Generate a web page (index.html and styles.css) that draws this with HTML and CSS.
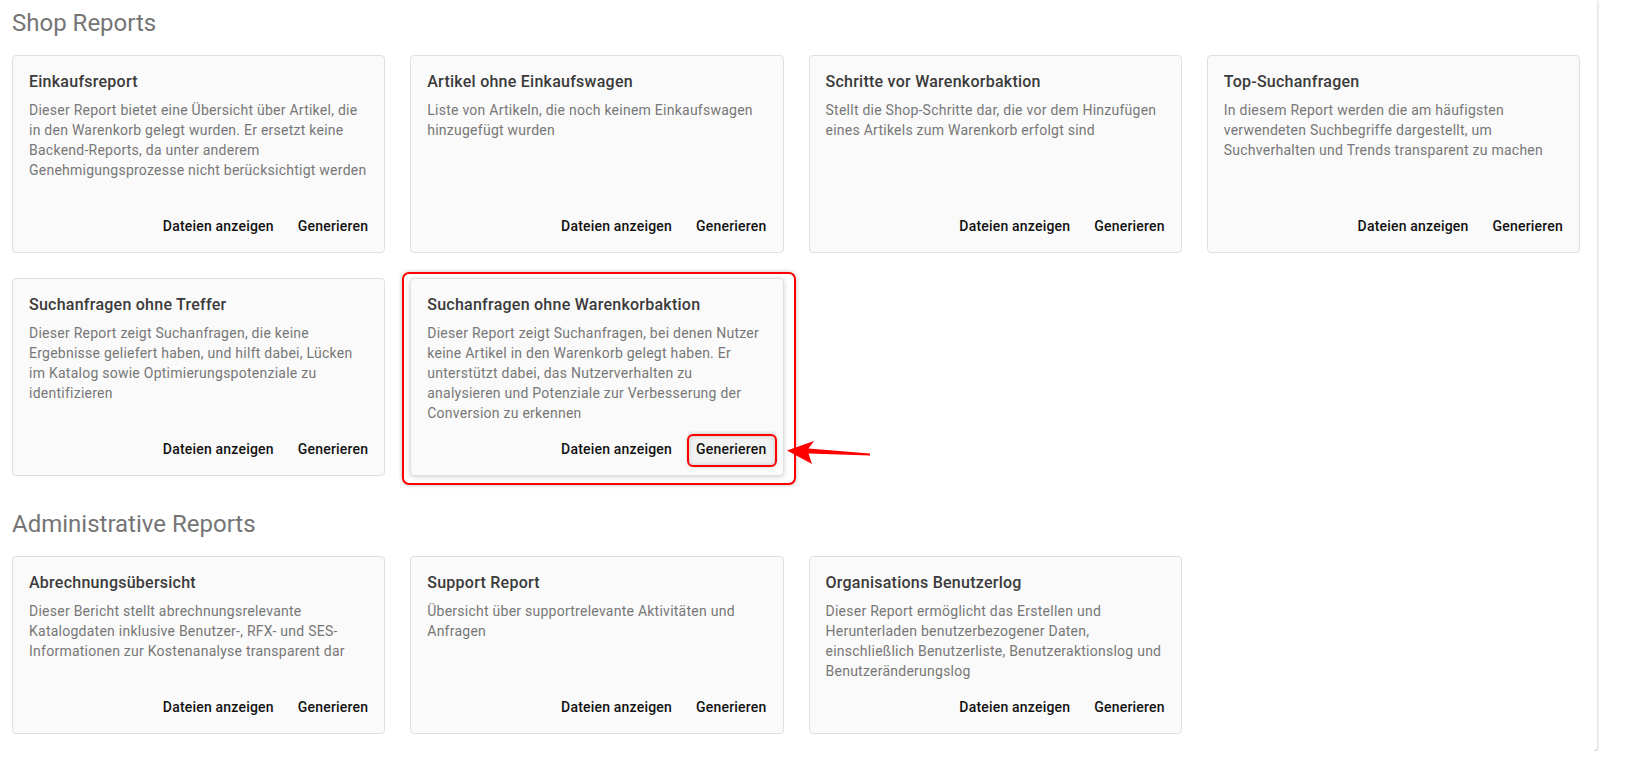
FILE: index.html
```html
<!DOCTYPE html>
<html>
    <head>
        <meta charset="utf-8">
        <link rel="stylesheet" href="styles.css">
    </head>
    <body>
    <div class="panel">
        <h2 class="section-title">Shop Reports</h2>
        <div class="report-grid">
            <div class="report-card">
                <h3 class="report-title">Einkaufsreport</h3>
                <p class="report-text">Dieser Report bietet eine Übersicht über Artikel, die in den Warenkorb gelegt wurden. Er ersetzt keine Backend-Reports, da unter anderem Genehmigungsprozesse nicht berücksichtigt werden</p>
                <div class="report-actions">
                    <button class="report-button">Dateien anzeigen</button>
                    <button class="report-button">Generieren</button>
                </div>
            </div>
            <div class="report-card">
                <h3 class="report-title">Artikel ohne Einkaufswagen</h3>
                <p class="report-text">Liste von Artikeln, die noch keinem Einkaufswagen hinzugefügt wurden</p>
                <div class="report-actions">
                    <button class="report-button">Dateien anzeigen</button>
                    <button class="report-button">Generieren</button>
                </div>
            </div>
            <div class="report-card">
                <h3 class="report-title">Schritte vor Warenkorbaktion</h3>
                <p class="report-text">Stellt die Shop-Schritte dar, die vor dem Hinzufügen eines Artikels zum Warenkorb erfolgt sind</p>
                <div class="report-actions">
                    <button class="report-button">Dateien anzeigen</button>
                    <button class="report-button">Generieren</button>
                </div>
            </div>
            <div class="report-card">
                <h3 class="report-title">Top-Suchanfragen</h3>
                <p class="report-text">In diesem Report werden die am häufigsten verwendeten Suchbegriffe dargestellt, um Suchverhalten und Trends transparent zu machen</p>
                <div class="report-actions">
                    <button class="report-button">Dateien anzeigen</button>
                    <button class="report-button">Generieren</button>
                </div>
            </div>
            <div class="report-card">
                <h3 class="report-title">Suchanfragen ohne Treffer</h3>
                <p class="report-text">Dieser Report zeigt Suchanfragen, die keine Ergebnisse geliefert haben, und hilft dabei, Lücken im Katalog sowie Optimierungspotenziale zu identifizieren</p>
                <div class="report-actions">
                    <button class="report-button">Dateien anzeigen</button>
                    <button class="report-button">Generieren</button>
                </div>
            </div>
            <div class="report-card marked">
                <span class="mark-frame"></span>
                <h3 class="report-title">Suchanfragen ohne Warenkorbaktion</h3>
                <p class="report-text">Dieser Report zeigt Suchanfragen, bei denen Nutzer keine Artikel in den Warenkorb gelegt haben. Er unterstützt dabei, das Nutzerverhalten zu analysieren und Potenziale zur Verbesserung der Conversion zu erkennen</p>
                <div class="report-actions">
                    <button class="report-button">Dateien anzeigen</button>
                    <button class="report-button marked-button">Generieren
                        <svg class="mark-arrow" width="84" height="26" viewBox="0 0 84 26">
                            <polygon points="0,10.5 27,1 21.5,8.5 83,13.5 83,15.5 21.5,13.5 25,24" fill="#f00"/>
                        </svg>
                    </button>
                </div>
            </div>
        </div>

        <h2 class="section-title spaced">Administrative Reports</h2>
        <div class="report-grid">
            <div class="report-card">
                <h3 class="report-title">Abrechnungsübersicht</h3>
                <p class="report-text">Dieser Bericht stellt abrechnungsrelevante Katalogdaten inklusive Benutzer-, RFX- und SES-Informationen zur Kostenanalyse transparent dar</p>
                <div class="report-actions">
                    <button class="report-button">Dateien anzeigen</button>
                    <button class="report-button">Generieren</button>
                </div>
            </div>
            <div class="report-card">
                <h3 class="report-title">Support Report</h3>
                <p class="report-text">Übersicht über supportrelevante Aktivitäten und Anfragen</p>
                <div class="report-actions">
                    <button class="report-button">Dateien anzeigen</button>
                    <button class="report-button">Generieren</button>
                </div>
            </div>
            <div class="report-card">
                <h3 class="report-title">Organisations Benutzerlog</h3>
                <p class="report-text">Dieser Report ermöglicht das Erstellen und Herunterladen benutzerbezogener Daten, einschließlich Benutzerliste, Benutzeraktionslog und Benutzeränderungslog</p>
                <div class="report-actions">
                    <button class="report-button">Dateien anzeigen</button>
                    <button class="report-button">Generieren</button>
                </div>
            </div>
        </div>
    </div>
    </body>
</html>
```

FILE: styles.css
```css
body {
    margin: 0;
    background-color: #fff;
    font-family: Roboto, "Liberation Sans", sans-serif;
}
.panel {
    width: 1597px;
    box-sizing: border-box;
    padding: 7px 17px 17px 12px;
    background-color: #fff;
    border-radius: 0 0 4px 0;
    box-shadow: 0 2px 1px -1px rgba(0,0,0,.25), 0 1px 1px 0 rgba(0,0,0,.16), 1px 1px 3px 0 rgba(0,0,0,.14);
}
.section-title {
    margin: 0 0 16px 0;
    font-size: 24px;
    line-height: 32px;
    font-weight: 400;
    color: #757575;
}
.section-title.spaced {
    margin-top: 32px;
}
.report-grid {
    display: grid;
    grid-template-columns: repeat(4, 1fr);
    grid-auto-rows: 1fr;
    gap: 25px;
}
.report-card {
    position: relative;
    display: flex;
    flex-direction: column;
    padding: 16px 16px 8px 16px;
    background-color: #fafafa;
    border: 1px solid #e0e0e0;
    border-radius: 4px;
}
.report-card.marked {
    box-shadow: 0 1px 5px rgba(0,0,0,.18);
}
.report-title {
    margin: 0 0 8px 0;
    font-size: 16px;
    line-height: 20px;
    font-weight: 500;
    letter-spacing: 0.25px;
    color: #3a3a3a;
}
.report-text {
    margin: 0 0 8px 0;
    font-size: 14px;
    line-height: 20px;
    letter-spacing: 0.25px;
    color: #777;
}
.report-actions {
    display: flex;
    justify-content: flex-end;
    gap: 8px;
    margin: auto -8px 0 0;
}
.report-button {
    position: relative;
    height: 36px;
    padding: 0 8px;
    border: none;
    border-radius: 4px;
    background: transparent;
    font-family: inherit;
    font-size: 14px;
    font-weight: 500;
    letter-spacing: 0.2px;
    color: #111;
    white-space: nowrap;
}
/* annotation: red frames and arrow */
.mark-frame {
    position: absolute;
    top: -7px; bottom: -10px;
    left: -9px; right: -13px;
    border: 2px solid #f00;
    border-radius: 7px;
    box-shadow: 0 0 4px rgba(0,0,0,.25);
    pointer-events: none;
}
.marked-button {
    background-color: rgba(0,0,0,.03);
}
.marked-button::after {
    content: "";
    position: absolute;
    top: 3px; bottom: 0;
    left: -1px; right: -2px;
    border: 2px solid #f00;
    border-radius: 6px;
    box-shadow: inset 0 0 4px rgba(0,0,0,.2), 0 0 3px rgba(0,0,0,.2);
}
.mark-arrow {
    position: absolute;
    left: calc(100% + 12px);
    top: 9px;
}
```
